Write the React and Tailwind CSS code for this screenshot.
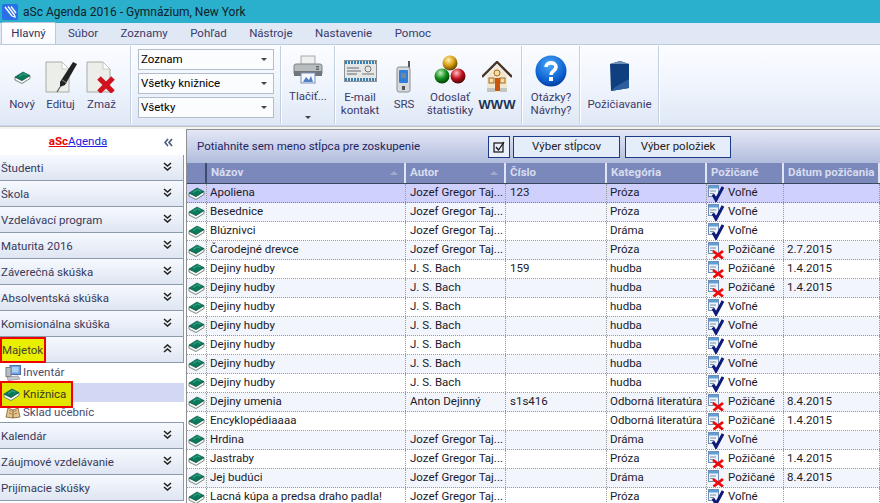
import React from "react";

const JGT = "Jozef Gregor Taj...";
const BACH = "J. S. Bach";

const rows = [
  ["Apoliena", JGT, "123", "Próza", 0, ""],
  ["Besednice", JGT, "", "Próza", 0, ""],
  ["Blúznivci", JGT, "", "Dráma", 0, ""],
  ["Čarodejné drevce", JGT, "", "Próza", 1, "2.7.2015"],
  ["Dejiny hudby", BACH, "159", "hudba", 1, "1.4.2015"],
  ["Dejiny hudby", BACH, "", "hudba", 1, "1.4.2015"],
  ["Dejiny hudby", BACH, "", "hudba", 0, ""],
  ["Dejiny hudby", BACH, "", "hudba", 0, ""],
  ["Dejiny hudby", BACH, "", "hudba", 0, ""],
  ["Dejiny hudby", BACH, "", "hudba", 0, ""],
  ["Dejiny hudby", BACH, "", "hudba", 0, ""],
  ["Dejiny umenia", "Anton Dejinný", "s1s416", "Odborná literatúra", 1, "8.4.2015"],
  ["Encyklopédiaaaa", "", "", "Odborná literatúra", 1, "1.4.2015"],
  ["Hrdina", JGT, "", "Dráma", 0, ""],
  ["Jastraby", JGT, "", "Próza", 1, "1.4.2015"],
  ["Jej budúci", JGT, "", "Dráma", 1, "8.4.2015"],
  ["Lacná kúpa a predsa draho padla!", JGT, "", "Próza", 0, ""],
];

const Book = () => (
  <svg viewBox="0 0 17 13" className="w-[17px] h-[13px] shrink-0">
    <path d="M1 6 L8 9.5 L16 4.5 L16 7.5 L8 12.5 L1 9 Z" fill="#f7f9f8" stroke="#56695f" strokeWidth="0.8" />
    <path d="M1 6 L9 1 L16 4.5 L8 9.5 Z" fill="#0a7a5c" stroke="#07533f" strokeWidth="0.6" />
    <path d="M5 5.5 L9.5 2.8 L12.5 4.2" fill="none" stroke="#43b294" strokeWidth="0.9" />
  </svg>
);

const Status = ({ out }) => (
  <svg viewBox="0 0 16 17" className="w-4 h-[17px] shrink-0">
    <rect x="0.5" y="0.5" width="10" height="11" fill="#eef3fb" stroke="#6f8fb8" />
    <rect x="1" y="1" width="9" height="2.5" fill="#5f9fd8" />
    <path d="M2 6h6M2 8.5h4" stroke="#7a8fa8" strokeWidth="1" />
    {out ? (
      <path d="M5 9 L15 16.5 M15 9 L5.5 16.5" stroke="#ee0a0a" strokeWidth="2.8" />
    ) : (
      <path d="M5 9.5 L8 15 L15 2" fill="none" stroke="#101a78" strokeWidth="3" />
    )}
  </svg>
);

const Chevrons = ({ dir = "down" }) => (
  <svg viewBox="0 0 9 9" className="w-[9px] h-[9px] shrink-0">
    {dir === "down" && <path d="M1 1 L4.5 4 L8 1 M1 5 L4.5 8 L8 5" fill="none" stroke="#222" strokeWidth="1.6" />}
    {dir === "up" && <path d="M1 4 L4.5 1 L8 4 M1 8 L4.5 5 L8 8" fill="none" stroke="#222" strokeWidth="1.6" />}
    {dir === "left" && <path d="M4 1 L1 4.5 L4 8 M8 1 L5 4.5 L8 8" fill="none" stroke="#44597a" strokeWidth="1.6" />}
  </svg>
);

const Caret = () => <span className="w-0 h-0 border-x-[3px] border-x-transparent border-t-[3px] border-t-[#444]" />;

const Doc = ({ children }) => (
  <svg viewBox="0 0 32 32" className="w-8 h-8">
    <path d="M1 1 H17 L24 8 V31 H1 Z" fill="#eceeea" stroke="#a9aca6" />
    <path d="M17 1 V8 H24 Z" fill="#fff" stroke="#b5b8b2" strokeWidth="0.7" />
    {children}
  </svg>
);

const EditIcon = () => (
  <Doc>
    <path d="M15 21 L28 1 L32 3 L20 24 L15 26 Z" fill="#222" />
    <path d="M17 19 L22 22" stroke="#8a8a8a" strokeWidth="1" />
    <path d="M15 26 L12 31" stroke="#555" strokeWidth="1.2" />
  </Doc>
);

const ZmazIcon = () => (
  <Doc>
    <path d="M13 17 L27 31 M27 17 L13 31" stroke="#cf1420" strokeWidth="5" />
  </Doc>
);

const Printer = () => (
  <svg viewBox="0 0 30 29" className="w-[30px] h-[29px]">
    <rect x="8" y="1" width="14" height="9" fill="#eee" stroke="#aaa" />
    <rect x="1" y="9" width="28" height="11" rx="2" fill="#b8bdbf" stroke="#7d8285" />
    <rect x="1" y="16" width="28" height="5" fill="#70777b" />
    <rect x="23" y="11" width="3" height="1.5" fill="#666" />
    <rect x="23" y="13.5" width="3" height="1.5" fill="#666" />
    <rect x="8" y="18" width="14" height="10" fill="#f4f7fb" stroke="#7c93b5" />
    <path d="M10 27 L13 22 L16 25 L18 21 L20 27 Z" fill="#4f7fc0" />
  </svg>
);

const Email = () => (
  <svg viewBox="0 0 33 22" className="w-[33px] h-[22px]">
    <rect x="0.5" y="0.5" width="32" height="21" fill="#e4e7e6" stroke="#8d9498" />
    <path d="M1 2.5 H32" stroke="#3b7fb2" strokeWidth="3" strokeDasharray="2 1" />
    <path d="M1 19.5 H32" stroke="#3b7fb2" strokeWidth="3" strokeDasharray="2 1" />
    <path d="M3 8h12M3 11h14M3 14h10" stroke="#8b9296" strokeWidth="1.4" />
    <circle cx="24" cy="9" r="3" fill="none" stroke="#777" />
    <path d="M18 14h12" stroke="#777" />
  </svg>
);

const Phone = () => (
  <svg viewBox="0 0 16 32" className="w-4 h-8">
    <rect x="12" y="0" width="2" height="8" fill="#555" />
    <rect x="1" y="6" width="13" height="25" rx="2" fill="#d7dadc" stroke="#8b8f92" />
    <rect x="3" y="9" width="9" height="13" rx="1" fill="#2f7ed8" />
    <rect x="5" y="12" width="5" height="5" fill="#70889f" />
    <rect x="6" y="25" width="3" height="4" fill="#555" />
  </svg>
);

const Balls = () => (
  <svg viewBox="0 0 32 30" className="w-8 h-[30px]">
    <defs>
      <radialGradient id="ballY" cx="40%" cy="30%" r="70%">
        <stop offset="0%" stopColor="#fff2b0" />
        <stop offset="55%" stopColor="#d89c10" />
        <stop offset="100%" stopColor="#5e4204" />
      </radialGradient>
      <radialGradient id="ballG" cx="40%" cy="30%" r="70%">
        <stop offset="0%" stopColor="#c5f0c0" />
        <stop offset="55%" stopColor="#12901c" />
        <stop offset="100%" stopColor="#06400a" />
      </radialGradient>
      <radialGradient id="ballR" cx="40%" cy="30%" r="70%">
        <stop offset="0%" stopColor="#ffc0c0" />
        <stop offset="55%" stopColor="#c0101c" />
        <stop offset="100%" stopColor="#4c0408" />
      </radialGradient>
    </defs>
    <circle cx="16" cy="8" r="7.5" fill="url(#ballY)" />
    <circle cx="8" cy="21" r="7.5" fill="url(#ballG)" />
    <circle cx="24" cy="21" r="7.5" fill="url(#ballR)" />
  </svg>
);

const House = () => (
  <svg viewBox="0 0 30 32" className="w-[30px] h-8">
    <path d="M5 14 L15 4 L25 14 V31 H5 Z" fill="#f1e6cf" />
    <path d="M0 16 L15 1 L30 16" fill="none" stroke="#4a3527" strokeWidth="2.4" />
    <circle cx="15" cy="12" r="3" fill="#f6dca0" stroke="#a56a24" />
    <rect x="7" y="17" width="5" height="5" fill="#f6dca0" stroke="#a56a24" />
    <rect x="18" y="17" width="5" height="5" fill="#f6dca0" stroke="#a56a24" />
    <rect x="13" y="17" width="5" height="13" fill="#c8560f" />
    <rect x="5" y="27" width="8" height="4" fill="#c5c5c0" />
    <rect x="18" y="27" width="7" height="4" fill="#c5c5c0" />
  </svg>
);

const Help = () => (
  <svg viewBox="0 0 32 32" className="w-8 h-8">
    <defs>
      <radialGradient id="helpBlue" cx="45%" cy="30%" r="75%">
        <stop offset="0%" stopColor="#4ca8f8" />
        <stop offset="70%" stopColor="#0a5fd0" />
        <stop offset="100%" stopColor="#06348c" />
      </radialGradient>
    </defs>
    <circle cx="16" cy="16" r="15.5" fill="url(#helpBlue)" />
    <path d="M11 12 C11 6.5 21 6.5 21 12 C21 16 16 15.5 16 20" fill="none" stroke="#fff" strokeWidth="3.6" />
    <rect x="14" y="22" width="4" height="4" fill="#fff" />
  </svg>
);

const BlueBook = () => (
  <svg viewBox="0 0 21 30" className="w-[21px] h-[30px]">
    <path d="M1 3 L11 0 L20 3 V27 L2 30 Z" fill="#0f3f7e" />
    <path d="M1 3 L11 0 L20 3 L11 3 Z" fill="#6d8fb8" />
    <path d="M2 30 L20 27 V18 L6 26 Z" fill="#2a5e9e" />
  </svg>
);

const RibbonButton = ({ icon, lines, w, bold, caret, pad }) => (
  <div className={`${w} flex flex-col items-center shrink-0`}>
    <div className={`h-[46px] shrink-0 flex items-start justify-center ${pad}`}>{icon}</div>
    <div className="h-[26px] shrink-0 flex flex-col items-center justify-center leading-[13px] text-[#3b3a6b]">
      {lines.map((l, i) => (
        <span
          key={i}
          className={`whitespace-nowrap ${bold ? "font-bold text-[13px] font-['Liberation_Sans',sans-serif] text-[#1d3555]" : ""}`}
        >
          {l}
        </span>
      ))}
      {caret && (
        <span className="mt-[13px] flex">
          <Caret />
        </span>
      )}
    </div>
  </div>
);

const Combo = ({ label }) => (
  <div className="h-[21px] border border-[#b3bdcc] bg-[#fbfcfe] flex items-center justify-between pl-[2px] pr-[6px] text-black">
    <span>{label}</span>
    <Caret />
  </div>
);

const Sep = () => <div className="w-[2px] h-[78px] mt-[1px] bg-[#c3cfdf] border-r border-white shrink-0" />;

const SideHead = ({ label, open, mark }) => (
  <div className="h-[26px] shrink-0 flex items-center justify-between bg-gradient-to-b from-[#f6f9fe] to-[#dfe6f2] border-b border-[#8d99ad] border-r pl-[1px] pr-[11px] text-[#383a5c]">
    {mark ? (
      <span className="h-[26px] w-[46px] -ml-[1px] mt-[1px] pt-[2px] border-2 border-[#f00000] bg-[#e9ef00] flex items-center leading-none text-[#444432]">
        {label}
      </span>
    ) : (
      <span className="whitespace-nowrap mt-[3px]">{label}</span>
    )}
    <span className="flex -mt-[2px]">
      <Chevrons dir={open ? "up" : "down"} />
    </span>
  </div>
);

const Inventar = () => (
  <svg viewBox="0 0 16 16" className="w-4 h-4">
    <rect x="5" y="0.5" width="10.5" height="9" fill="#6e9fe0" stroke="#4a6fa8" />
    <rect x="7" y="2" width="6.5" height="5.5" fill="#a9cdf4" />
    <rect x="1" y="2.5" width="5" height="9" fill="#b8bcc4" stroke="#7b7f88" />
    <path d="M2 12 L13 11 L15 14 L3 15.5 Z" fill="#c9c9cf" stroke="#8a8a92" strokeWidth="0.7" />
  </svg>
);

const Sklad = () => (
  <svg viewBox="0 0 16 13" className="w-4 h-[13px]">
    <path d="M1 11 L3 2 L8 4 L13 2 L15 11 L8 12 Z" fill="#e2c68e" stroke="#7c5f30" strokeWidth="0.8" />
    <path d="M8 4 V12" stroke="#7c5f30" />
    <path d="M4.5 4.5 L6.5 5.3 M4 7 L6.5 8 M9.5 5.3 L11.5 4.5 M9.5 8 L12 7" stroke="#a4503a" strokeWidth="0.8" />
  </svg>
);

const Cell = ({ w, children, className = "pl-[3px]" }) => (
  <div className={`${w} shrink-0 h-full border-r border-dotted border-[#9a9a9a] flex items-center overflow-hidden whitespace-nowrap ${className}`}>
    {children}
  </div>
);

const HeadCell = ({ w, label, sort }) => (
  <div className={`${w} shrink-0 h-full border-r-2 border-r-[#e2e6f2] flex items-center justify-between pl-[4px] pr-[6px] font-bold text-[#d7dcee] overflow-hidden whitespace-nowrap`}>
    <span>{label}</span>
    {sort && <span className="w-0 h-0 border-x-[4px] border-x-transparent border-b-[4px] border-b-[#a3abc9]" />}
  </div>
);

export default function App() {
  return (
    <div className="w-[880px] h-[503px] overflow-hidden bg-white text-[11.5px] flex flex-col font-['Roboto',sans-serif]">
      <div className="h-[23px] shrink-0 bg-[#2aafcd] flex items-center pl-[2px] text-[#10222a] text-[12px]">
        <svg viewBox="0 0 16 16" className="w-4 h-4 mr-[5px]">
          <rect width="16" height="16" rx="2" fill="#2a6ee8" />
          <path d="M3 3 L10 12 M6 2.5 L12.5 11 M9 2.5 L14 9 M10 12 L13 13 L12.5 11" fill="none" stroke="#fff" strokeWidth="1.3" />
        </svg>
        aSc Agenda 2016 - Gymnázium, New York
      </div>

      <div className="h-[22px] shrink-0 bg-[#dfe8f4] flex items-end text-[#3b3a6b] border-b border-[#bccadc]">
        <div className="ml-[1px] h-[22px] w-[55px] bg-gradient-to-b from-[#ffffff] to-[#f7faff] border border-b-0 border-[#bccadc] rounded-t-[2px] flex items-center justify-center text-[#33325e]">
          Hlavný
        </div>
        <div className="h-[21px] flex items-center ml-[12px] gap-[22.5px]">
          <span>Súbor</span>
          <span>Zoznamy</span>
          <span>Pohľad</span>
          <span>Nástroje</span>
          <span>Nastavenie</span>
          <span>Pomoc</span>
        </div>
      </div>

      <div className="h-[81px] shrink-0 bg-gradient-to-b from-[#fbfcff] via-[#f0f5fd] to-[#dfe8f5] border-b border-[#c9d8ee] flex">
        <div className="w-[130px] shrink-0 flex pl-[6px]">
          <RibbonButton w="w-[32px]" icon={<Book />} lines={["Nový"]} pad="pt-[26px]" />
          <RibbonButton w="w-[45px]" icon={<EditIcon />} lines={["Edituj"]} pad="pt-[16px]" />
          <RibbonButton w="w-[37px]" icon={<ZmazIcon />} lines={["Zmaž"]} pad="pt-[16px]" />
        </div>
        <Sep />
        <div className="w-[148px] shrink-0 flex flex-col gap-[3px] pt-[4px] pl-[6px] pr-[6px]">
          <Combo label="Zoznam" />
          <Combo label="Všetky knižnice" />
          <Combo label="Všetky" />
        </div>
        <Sep />
        <div className="w-[52px] shrink-0 flex">
          <RibbonButton w="w-[52px]" icon={<Printer />} lines={["Tlačiť..."]} pad="pt-[10px]" caret />
        </div>
        <Sep />
        <div className="w-[185px] shrink-0 flex">
          <RibbonButton w="w-[48px]" icon={<Email />} lines={["E-mail", "kontakt"]} pad="pt-[15px]" />
          <RibbonButton w="w-[40px]" icon={<Phone />} lines={["SRS"]} pad="pt-[16px]" />
          <RibbonButton w="w-[52px]" icon={<Balls />} lines={["Odoslať", "štatistiky"]} pad="pt-[10px]" />
          <RibbonButton w="w-[42px]" icon={<House />} lines={["WWW"]} pad="pt-[16px]" bold />
        </div>
        <Sep />
        <div className="w-[56px] shrink-0 flex">
          <RibbonButton w="w-[56px]" icon={<Help />} lines={["Otázky?", "Návrhy?"]} pad="pt-[10px]" />
        </div>
        <Sep />
        <div className="w-[77px] shrink-0 flex">
          <RibbonButton w="w-[77px]" icon={<BlueBook />} lines={["Požičiavanie"]} pad="pt-[16px]" />
        </div>
        <Sep />
      </div>
      <div className="h-[3px] shrink-0 border-t border-[#c2c2c2] bg-[#f3f3f3]" />

      <div className="flex-1 min-h-0 flex">
        <div className="w-[184px] shrink-0 flex flex-col">
          <div className="h-[26px] shrink-0 flex items-center justify-between pr-[11px]">
            <span className="flex-1 text-center underline text-[#2020e0] pr-[8px]">
              <span className="font-bold underline text-[#ee0000]">aSc</span>Agenda
            </span>
            <Chevrons dir="left" />
          </div>
          <SideHead label="Študenti" />
          <SideHead label="Škola" />
          <SideHead label="Vzdelávací program" />
          <SideHead label="Maturita 2016" />
          <SideHead label="Záverečná skúška" />
          <SideHead label="Absolventská skúška" />
          <SideHead label="Komisionálna skúška" />
          <SideHead label="Majetok" open mark />
          <div className="h-[60px] shrink-0 flex flex-col text-[#4b4b6e] border-b border-[#8d99ad]">
            <div className="h-[20px] flex items-center pl-[5px] gap-[2px]">
              <Inventar />
              <span>Inventár</span>
            </div>
            <div className="relative h-[20px] bg-[#d2d7f3] flex items-center">
              <div className="absolute left-0 -top-[2px] w-[73px] h-[27px] border-2 border-[#f00000] bg-[#e1e500] flex items-center pl-[1px] gap-[3px] text-[#38381f]">
                <Book />
                <span>Knižnica</span>
              </div>
            </div>
            <div className="h-[20px] flex items-center pl-[5px] gap-[2px] pt-[1px]">
              <Sklad />
              <span>Sklad učebníc</span>
            </div>
          </div>
          <SideHead label="Kalendár" />
          <SideHead label="Záujmové vzdelávanie" />
          <SideHead label="Prijímacie skúšky" />
        </div>

        <div className="w-[2px] shrink-0" />
        <div className="flex-1 min-w-0 flex flex-col border-l border-t border-[#8f8f8f] overflow-hidden">
          <div className="h-[33px] shrink-0 bg-gradient-to-b from-[#e3e7f6] to-[#b2bddd] flex items-center pl-[10px] text-[#24245e]">
            <span className="w-[291px] whitespace-nowrap">Potiahnite sem meno stĺpca pre zoskupenie</span>
            <div className="w-[22px] h-[22px] border border-[#1c3a86] bg-[#eaf0fb] flex items-center justify-center">
              <svg viewBox="0 0 12 12" className="w-3 h-3">
                <rect x="1" y="2" width="9" height="9" fill="none" stroke="#111" strokeWidth="1.2" />
                <path d="M3 6 L5.5 9 L11 1" fill="none" stroke="#111" strokeWidth="1.3" />
              </svg>
            </div>
            <div className="ml-[3px] w-[107px] h-[22px] border border-[#1c3a86] bg-[#e6edfa] flex items-center justify-center text-[#222]">
              Výber stĺpcov
            </div>
            <div className="ml-[5px] w-[106px] h-[22px] border border-[#1c3a86] bg-[#e6edfa] flex items-center justify-center text-[#222]">
              Výber položiek
            </div>
          </div>

          <div className="h-[21px] shrink-0 bg-[#7b88bb] flex border-b border-[#3c4560]">
            <div className="w-[20px] shrink-0 border-r-2 border-r-[#3f4a6c]" />
            <HeadCell w="w-[199px]" label="Názov" sort />
            <HeadCell w="w-[100px]" label="Autor" sort />
            <HeadCell w="w-[101px]" label="Číslo" />
            <HeadCell w="w-[100px]" label="Kategória" />
            <HeadCell w="w-[77px]" label="Požičané" />
            <HeadCell w="w-[96px]" label="Dátum požičania" />
          </div>

          {rows.map((r, i) => (
            <div
              key={i}
              className={`h-[19px] shrink-0 flex items-center text-[#1a1a2a] border-b border-dotted border-[#9a9a9a] ${
                i === 0 ? "bg-[#cfd0fb] border-b-[#6f74e0]" : i % 2 === 0 ? "bg-white" : "bg-[#f2f5fc]"
              }`}
            >
              <Cell w="w-[20px]" className="pl-[1px]">
                <Book />
              </Cell>
              <Cell w="w-[199px]">{r[0]}</Cell>
              <Cell w="w-[100px]" className="pl-[4px]">{r[1]}</Cell>
              <Cell w="w-[101px]" className="pl-[4px]">{r[2]}</Cell>
              <Cell w="w-[100px]">{r[3]}</Cell>
              <Cell w="w-[77px]" className="gap-[4px] pl-[1px]">
                <Status out={r[4] === 1} />
                {r[4] === 1 ? "Požičané" : "Voľné"}
              </Cell>
              <Cell w="w-[96px]">{r[5]}</Cell>
            </div>
          ))}
        </div>
      </div>
    </div>
  );
}
